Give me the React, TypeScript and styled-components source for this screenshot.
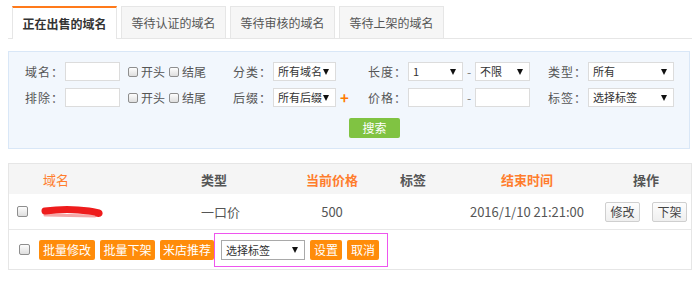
import React from 'react';
import styled, { createGlobalStyle } from 'styled-components';

const GlobalStyle = createGlobalStyle`
	body {
		margin: 0;
		background: #fff;
		font-family: "Noto Sans CJK SC", "Liberation Sans", sans-serif;
		color: #333;
	}
`;

const Page = styled.div`
	padding: 6px 0 0 8px;
	width: 684px;
`;

const TabBar = styled.div`
	display: flex;
	gap: 4px;
	padding-left: 4px;
	height: 32px;
	border-bottom: 1px solid #e6e6e6;
`;

const Tab = styled.div<{ $active?: boolean }>`
	box-sizing: border-box;
	width: 105px;
	height: ${p => (p.$active ? 33 : 32)}px;
	display: flex;
	align-items: center;
	justify-content: center;
	font-size: 12px;
	border: 1px solid #e6e6e6;
	border-bottom: none;
	border-top: ${p => (p.$active ? '2px solid #ff7a1a' : '1px solid #e6e6e6')};
	background: ${p => (p.$active ? '#fff' : '#f6f6f6')};
	color: ${p => (p.$active ? '#333' : '#555')};
	font-weight: ${p => (p.$active ? 'bold' : 'normal')};
`;

const SearchPanel = styled.div`
	box-sizing: border-box;
	margin-top: 12px;
	width: 682px;
	height: 98px;
	border: 1px solid #d9e7f7;
	background: #f2f7fd;
	padding: 10px 0 0 16px;
`;

const FilterRow = styled.div`
	display: flex;
	align-items: center;
	height: 19px;
	margin-bottom: 7px;
`;

const Field = styled.div<{ $w?: number }>`
	display: flex;
	align-items: center;
	width: ${p => (p.$w ? `${p.$w}px` : 'auto')};
	flex-shrink: 0;
`;

const Label = styled.span`
	width: 40px;
	font-size: 12px;
	color: #555;
	letter-spacing: 1px;
	white-space: nowrap;
`;

const TextInput = styled.div<{ $w: number }>`
	box-sizing: border-box;
	width: ${p => p.$w}px;
	height: 19px;
	border: 1px solid #dcdcdc;
	background: #fff;
`;

const SelectBox = styled.div<{ $w: number; $dark?: boolean; $h?: number }>`
	box-sizing: border-box;
	position: relative;
	width: ${p => p.$w}px;
	height: ${p => p.$h ?? 19}px;
	border: 1px solid ${p => (p.$dark ? '#a9a9a9' : '#dcdcdc')};
	background: #fff;
	font-size: 11px;
	line-height: ${p => (p.$h ?? 19) - 2}px;
	color: #333;
	padding-left: 4px;
	padding-right: 14px;
	white-space: nowrap;
	overflow: hidden;

	&::after {
		content: '';
		position: absolute;
		right: 6px;
		top: 50%;
		margin-top: -3px;
		border-left: 3px solid transparent;
		border-right: 3px solid transparent;
		border-top: 6px solid #111;
	}
`;

const Check = styled.span<{ $size?: number }>`
	box-sizing: border-box;
	display: inline-block;
	width: ${p => p.$size ?? 10}px;
	height: ${p => p.$size ?? 10}px;
	border: 1px solid #8e8e8e;
	border-radius: 2px;
	background: linear-gradient(#fdfdfd, #dedede);
	flex-shrink: 0;
`;

const CheckText = styled.span`
	font-size: 12px;
	color: #555;
	margin: 0 4px 0 3px;
`;

const Dash = styled.span`
	width: 12px;
	text-align: center;
	font-size: 12px;
	color: #777;
`;

const Plus = styled.span`
	margin-left: 4px;
	color: #ff7a00;
	font-size: 15px;
	font-weight: bold;
	line-height: 1;
`;

const SearchButton = styled.div`
	margin: 11px 0 0 324px;
	width: 51px;
	height: 20px;
	border-radius: 2px;
	background: #80c342;
	color: #fff;
	font-size: 12px;
	line-height: 20px;
	text-align: center;
`;

const Table = styled.div`
	box-sizing: border-box;
	margin-top: 14px;
	width: 684px;
	border: 1px solid #e6e6e6;
`;

const Row = styled.div<{ $h: number; $head?: boolean }>`
	display: grid;
	grid-template-columns: 27px 165px 90px 82px 80px 148px 90px;
	align-items: center;
	height: ${p => p.$h}px;
	background: ${p => (p.$head ? '#f5f5f5' : '#fff')};
	border-bottom: ${p => (p.$head ? 'none' : '1px solid #e8e8e8')};
	font-size: 13px;
	color: #555;
`;

const Cell = styled.div<{ $align?: string; $pad?: number; $orange?: boolean; $bold?: boolean }>`
	display: flex;
	align-items: center;
	justify-content: ${p => p.$align ?? 'center'};
	padding-left: ${p => p.$pad ?? 0}px;
	gap: 12px;
	color: ${p => (p.$orange ? '#ff7d2d' : 'inherit')};
	font-weight: ${p => (p.$bold ? 'bold' : 'normal')};
	white-space: nowrap;
`;

const SmallButton = styled.div`
	box-sizing: border-box;
	width: 35px;
	height: 20px;
	border: 1px solid #cfcfcf;
	border-radius: 2px;
	background: linear-gradient(#fdfdfd, #efefef);
	font-size: 12px;
	line-height: 18px;
	text-align: center;
	color: #444;
`;

const Footer = styled.div`
	display: flex;
	align-items: center;
	height: 39px;
	padding-left: 10px;
`;

const OrangeButton = styled.div<{ $w: number }>`
	width: ${p => p.$w}px;
	height: 20px;
	margin-right: 5px;
	border-radius: 2px;
	background: #ff8c0a;
	color: #fff;
	font-size: 12px;
	line-height: 20px;
	text-align: center;
	flex-shrink: 0;
`;

const TagBox = styled.div`
	box-sizing: border-box;
	display: flex;
	align-items: center;
	margin-left: -5px;
	padding: 0 3px 0 6px;
	height: 34px;
	border: 1px solid #ee55ee;
	background: #fff;
`;

const Scribble = () => (
	<svg width="62" height="14" viewBox="0 0 62 14">
		<path d="M4 10 L54 11" stroke="#f4a8a8" strokeWidth="3" strokeLinecap="round" />
		<path d="M4 6 C 18 4, 34 4, 48 6 S 58 9, 56 8" stroke="#ee1c1c" strokeWidth="7" strokeLinecap="round" fill="none" />
	</svg>
);

const App = () => {
	return (
		<>
			<GlobalStyle />
			<Page>
				<TabBar>
					<Tab $active>正在出售的域名</Tab>
					<Tab>等待认证的域名</Tab>
					<Tab>等待审核的域名</Tab>
					<Tab>等待上架的域名</Tab>
				</TabBar>

				<SearchPanel>
					<FilterRow>
						<Field $w={208}>
							<Label>域名：</Label>
							<TextInput $w={55} />
							<Check style={{ marginLeft: 8 }} />
							<CheckText>开头</CheckText>
							<Check />
							<CheckText>结尾</CheckText>
						</Field>
						<Field $w={135}>
							<Label>分类：</Label>
							<SelectBox $w={63}>所有域名</SelectBox>
						</Field>
						<Field $w={180}>
							<Label>长度：</Label>
							<SelectBox $w={55}>1</SelectBox>
							<Dash>-</Dash>
							<SelectBox $w={55}>不限</SelectBox>
						</Field>
						<Field>
							<Label>类型：</Label>
							<SelectBox $w={86}>所有</SelectBox>
						</Field>
					</FilterRow>
					<FilterRow>
						<Field $w={208}>
							<Label>排除：</Label>
							<TextInput $w={55} />
							<Check style={{ marginLeft: 8 }} />
							<CheckText>开头</CheckText>
							<Check />
							<CheckText>结尾</CheckText>
						</Field>
						<Field $w={135}>
							<Label>后缀：</Label>
							<SelectBox $w={63}>所有后缀</SelectBox>
							<Plus>+</Plus>
						</Field>
						<Field $w={180}>
							<Label>价格：</Label>
							<TextInput $w={55} />
							<Dash>-</Dash>
							<TextInput $w={55} />
						</Field>
						<Field>
							<Label>标签：</Label>
							<SelectBox $w={86}>选择标签</SelectBox>
						</Field>
					</FilterRow>
					<SearchButton>搜索</SearchButton>
				</SearchPanel>

				<Table>
					<Row $h={30} $head>
						<Cell />
						<Cell $align="flex-start" $pad={7} $orange>域名</Cell>
						<Cell $align="flex-start" $bold>类型</Cell>
						<Cell $orange $bold>当前价格</Cell>
						<Cell $bold>标签</Cell>
						<Cell $orange $bold>结束时间</Cell>
						<Cell $bold>操作</Cell>
					</Row>
					<Row $h={35}>
						<Cell><Check $size={11} /></Cell>
						<Cell $align="flex-start" $pad={5}><Scribble /></Cell>
						<Cell $align="flex-start">一口价</Cell>
						<Cell>500</Cell>
						<Cell />
						<Cell>2016/1/10 21:21:00</Cell>
						<Cell>
							<SmallButton>修改</SmallButton>
							<SmallButton>下架</SmallButton>
						</Cell>
					</Row>
					<Footer>
						<Check $size={11} style={{ marginRight: 9 }} />
						<OrangeButton $w={56}>批量修改</OrangeButton>
						<OrangeButton $w={55}>批量下架</OrangeButton>
						<OrangeButton $w={54}>米店推荐</OrangeButton>
						<TagBox>
							<SelectBox $w={84} $h={20} $dark>选择标签</SelectBox>
							<OrangeButton $w={32} style={{ marginLeft: 5 }}>设置</OrangeButton>
							<OrangeButton $w={32}>取消</OrangeButton>
						</TagBox>
					</Footer>
				</Table>
			</Page>
		</>
	);
};

export default App;
